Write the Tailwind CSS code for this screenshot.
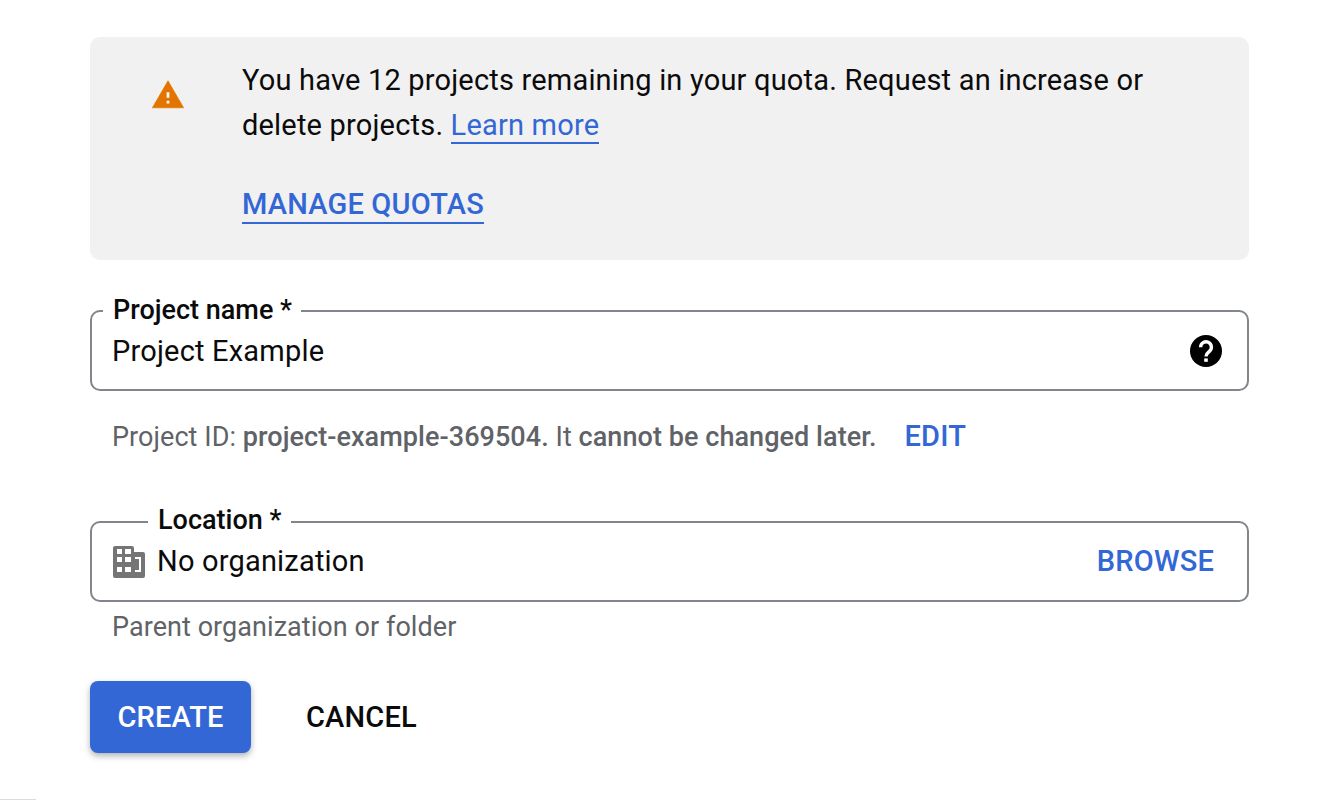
<!DOCTYPE html>
<html lang="en">
<head>
  <meta charset="UTF-8">
  <title>New Project</title>
  <script src="https://cdn.jsdelivr.net/npm/@tailwindcss/browser@4"></script>
</head>
<body class="relative bg-white font-['Roboto',sans-serif] text-[#0b0b0b] h-[800px] overflow-hidden tracking-[0.19px]">
  <main class="w-[1159px] ml-[90px] pt-[37px]">

    <!-- quota notice -->
    <section class="h-[223px] bg-[#f1f1f1] rounded-[10px] flex pt-[21px]">
      <div class="w-[152px] flex justify-center pt-[20px] shrink-0 pl-[4px]">
        <svg class="w-[34px] h-[34px]" viewBox="0 0 24 24"><path fill="#e37400" stroke="#e37400" stroke-width="0.5" stroke-linejoin="round" d="M1 21h22L12 2 1 21z"/><path fill="#f6f6f6" d="M13 18h-2v-2h2v2zm0-4h-2v-4h2v4z"/></svg>
      </div>
      <div>
        <p class="text-[29px] leading-[45px] w-[920px]">You have 12 projects remaining in your quota. Request an increase or delete projects. <a href="#" class="text-[#3367d6] border-b-2 border-[#3367d6]">Learn more</a></p>
        <a href="#" class="inline-block mt-[39px] text-[29px] leading-[35px] font-medium text-[#3367d6] border-b-2 border-[#3367d6]">MANAGE QUOTAS</a>
      </div>
    </section>

    <!-- project name -->
    <div class="relative mt-[50px] h-[81px] border-2 border-[#80868b] rounded-[10px] flex items-center justify-between pl-[20px] pr-[25px]">
      <span class="absolute left-[11px] -top-[17px] bg-white pl-[10px] pr-[9px] text-[27px] leading-[30px] font-medium tracking-normal">Project name *</span>
      <span class="text-[29px] pt-[2px]">Project Example</span>
      <svg class="w-[32px] h-[32px]" viewBox="0 0 32 32"><circle cx="16" cy="16" r="16" fill="#000"/><path fill="none" stroke="#fff" stroke-width="3.4" d="M10.6 12.2a5.4 5.4 0 1 1 8.8 4.2c-2 1.6-3.4 2.4-3.4 5"/><rect x="14.2" y="23.4" width="3.6" height="3.4" fill="#fff"/></svg>
    </div>
    <p class="mt-[26px] pl-[22px] text-[27px] leading-[38px] text-[#5f6368] tracking-[0.06px]">Project ID: <b class="font-medium">project-example-369504.</b> It <b class="font-medium">cannot be changed later.</b><a href="#" class="ml-[28px] text-[29px] font-medium text-[#3367d6] tracking-[0.2px]">EDIT</a></p>

    <!-- location -->
    <div class="relative mt-[65px] h-[81px] border-2 border-[#80868b] rounded-[10px] flex items-center justify-between pl-[21px] pr-[33px]">
      <span class="absolute left-[56px] -top-[18px] bg-white px-[10px] text-[27px] leading-[30px] font-medium tracking-normal">Location *</span>
      <div class="flex items-center gap-[12px]">
        <svg class="w-[32px] h-[32px]" viewBox="0 0 32 32"><path fill="#757575" fill-rule="evenodd" d="M2 0h17a2 2 0 0 1 2 2v4h9a2 2 0 0 1 2 2v22a2 2 0 0 1-2 2H2a2 2 0 0 1-2-2V2a2 2 0 0 1 2-2zM4 3v5h5V3zm8 0v5h6V3zM4 11v5h5v-5zm8 0v5h6v-5zM4 21v5h5v-5zm8 0v5h6v-5zM22 11v2h4v11h-4v2h6V11z"/></svg>
        <span class="text-[29px]">No organization</span>
      </div>
      <a href="#" class="text-[29px] font-medium text-[#3367d6]">BROWSE</a>
    </div>
    <p class="mt-[6px] pl-[22px] text-[27px] leading-[38px] text-[#5f6368] tracking-[0.06px]">Parent organization or folder</p>

    <!-- actions -->
    <div class="mt-[35px] flex items-center">
      <button class="w-[161px] h-[72px] pt-[2px] bg-[#3367d6] text-white text-[29px] font-medium rounded-[8px] shadow-[0_3px_6px_rgba(60,64,67,0.4)]">CREATE</button>
      <button class="ml-[55px] pt-[2px] text-[29px] font-medium">CANCEL</button>
    </div>
  </main>
  <div class="absolute left-0 bottom-0 w-[36px] h-[1px] bg-[#dcdcdc]"></div>
</body>
</html>
